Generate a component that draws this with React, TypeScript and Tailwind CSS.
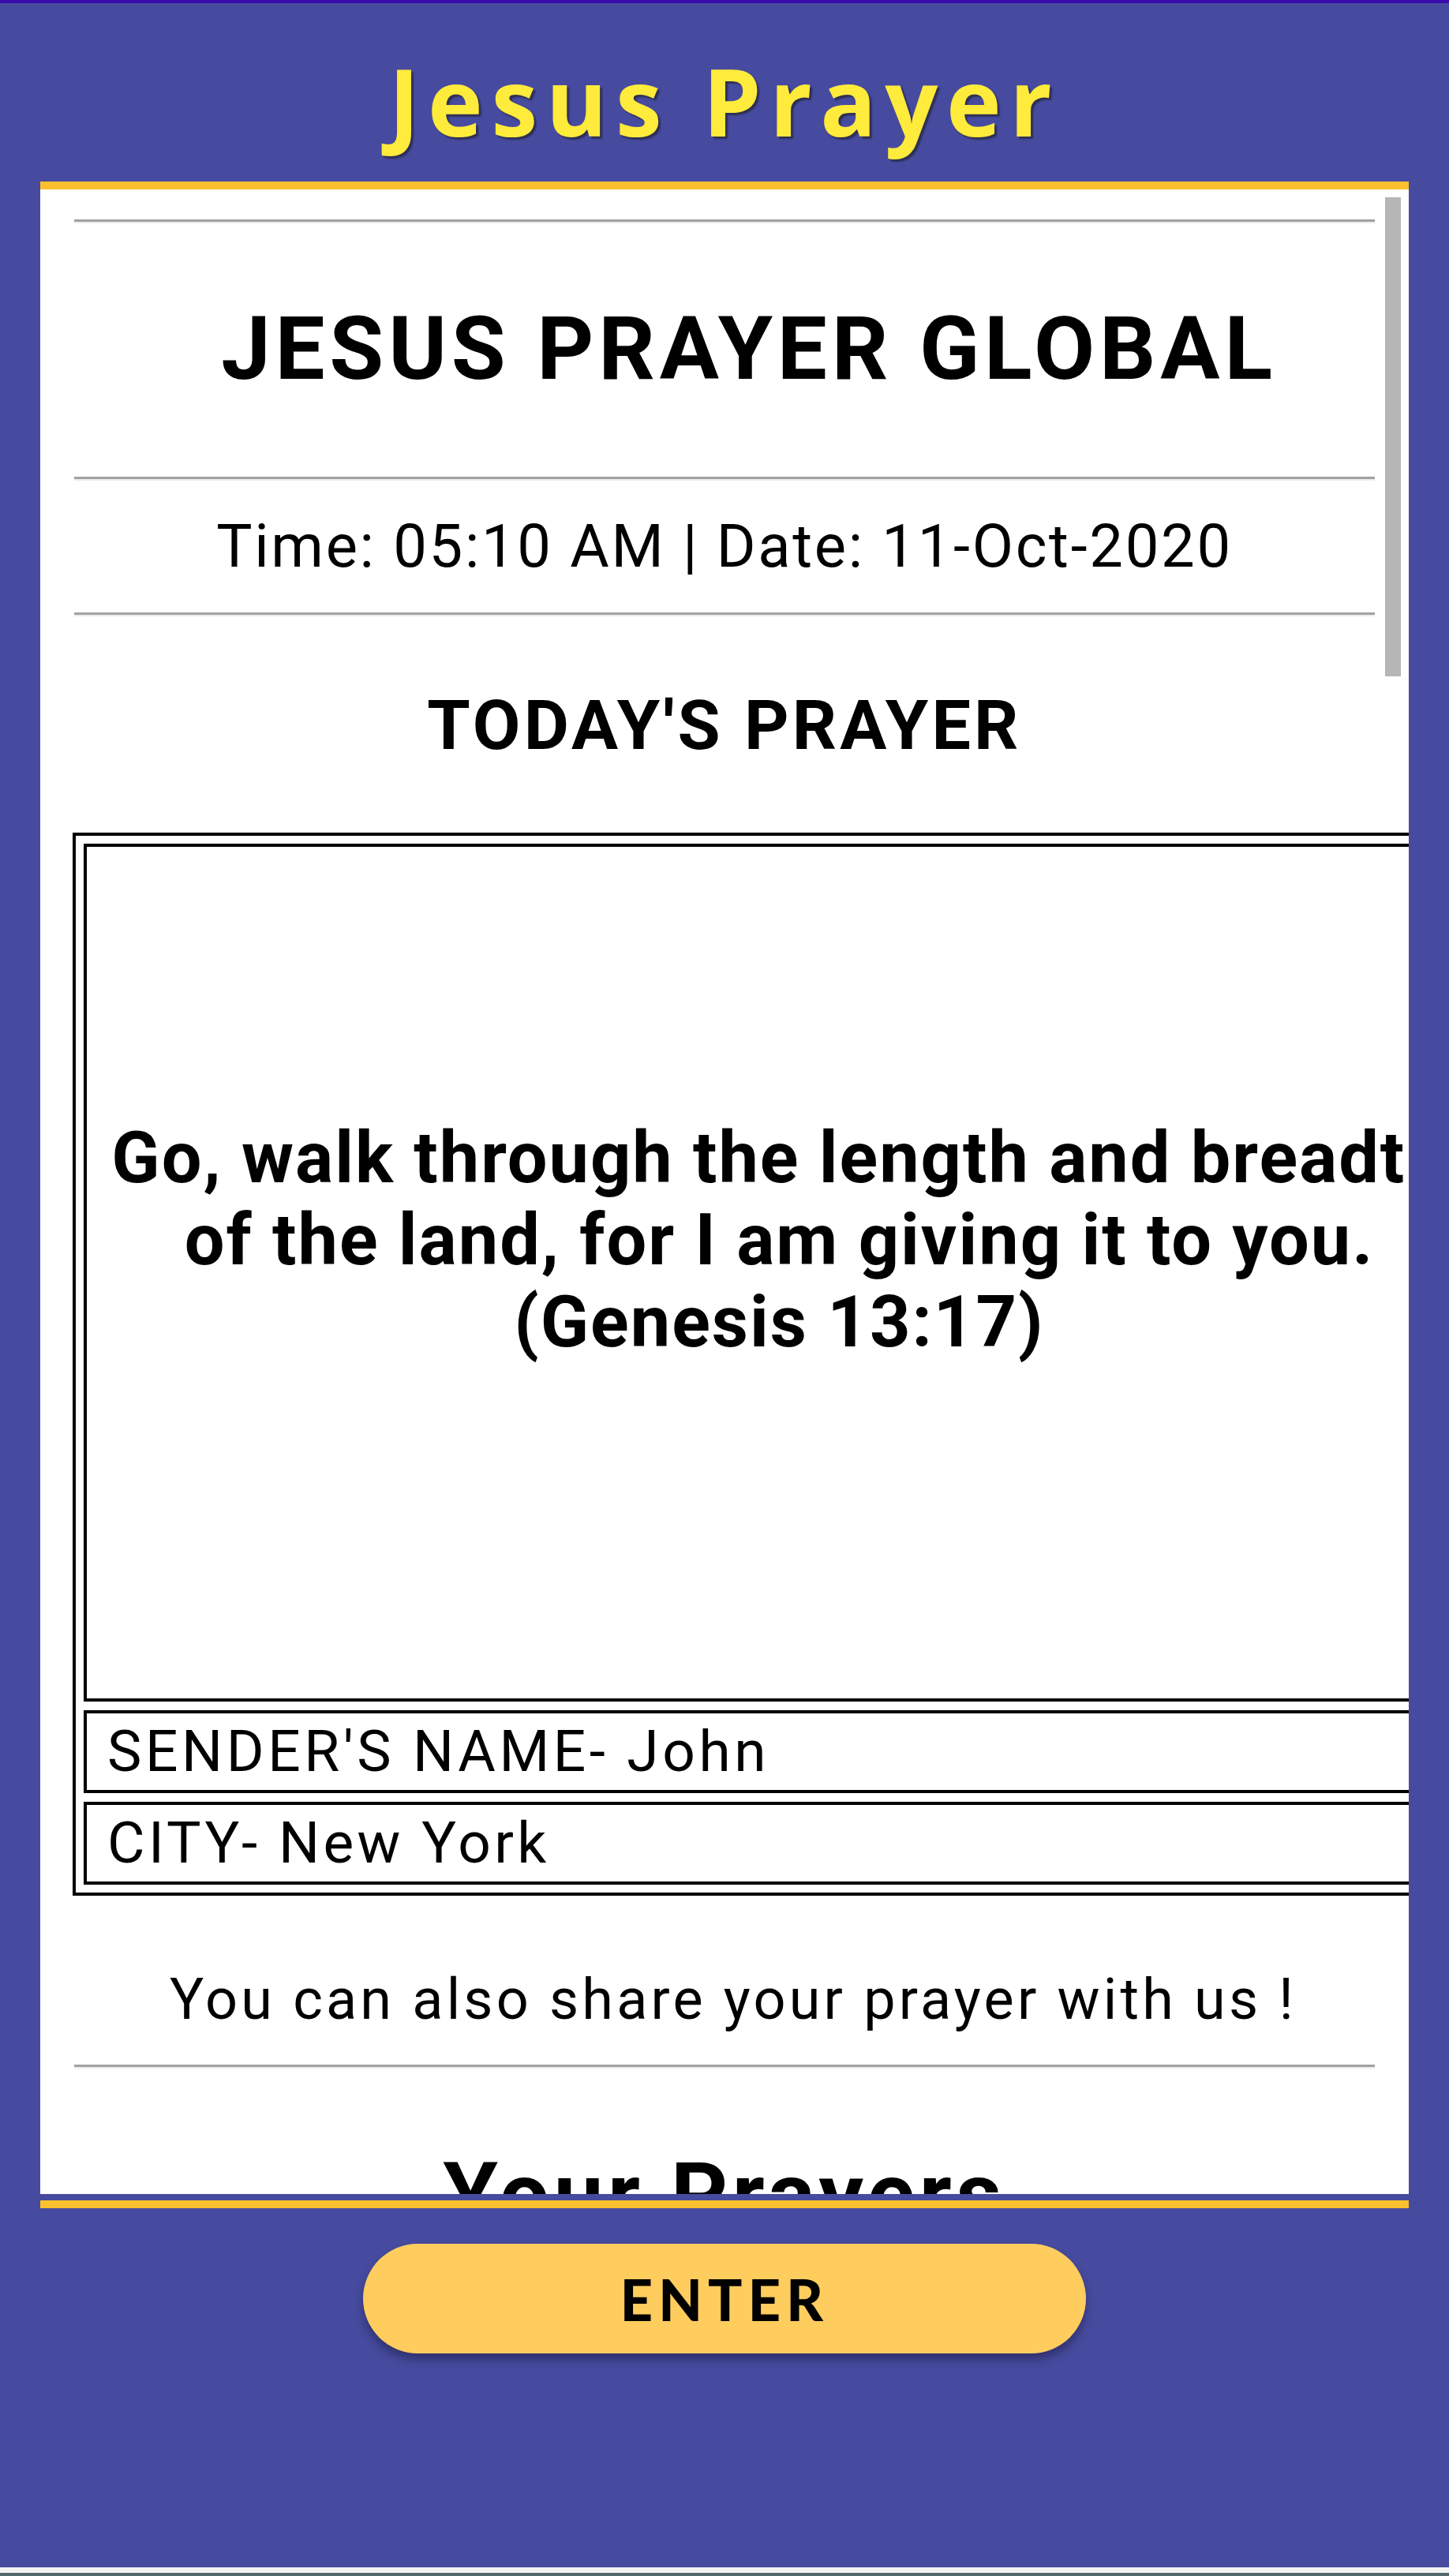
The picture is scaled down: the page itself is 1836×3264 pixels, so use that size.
import React from 'react';

const Rule: React.FC = () => (
  <div className="mx-[2px] border-t-[3px] border-t-[#a2a2a2] border-b-[2px] border-b-[#ececec]" />
);

export default function App() {
  return (
    <div className="w-[1836px] h-[3264px] flex flex-col bg-[#474b9f] font-['Roboto',sans-serif] overflow-hidden">
      <div className="h-[4px] bg-[#3a0cae]" />

      {/* header */}
      <div className="h-[226px] pt-[22px] flex items-center justify-center">
        <h1 className="text-[118px] leading-none font-bold tracking-[0.09em] text-[#ffeb3b] font-['Open_Sans',sans-serif] [text-shadow:3px_3px_2px_rgba(30,30,30,0.6)]">
          Jesus Prayer
        </h1>
      </div>

      {/* scrolling card */}
      <div className="mx-[51px] relative">
        <div className="h-[10px] bg-[#fbc02d]" />
        <div className="h-[2540px] bg-white overflow-hidden px-[41px] pt-[38px]">
          <Rule />
          <h2 className="mt-[103px] pl-[62px] text-center text-[112px] leading-none font-bold tracking-[0.052em] text-black">
            JESUS PRAYER GLOBAL
          </h2>
          <div className="mt-[106px]">
            <Rule />
          </div>
          <p className="mt-[45px] text-center text-[76px] leading-none tracking-[0.035em] text-black">
            Time: 05:10 AM | Date: 11-Oct-2020
          </p>
          <div className="mt-[46px]">
            <Rule />
          </div>
          <h3 className="mt-[94px] text-center text-[88px] leading-none font-bold tracking-[0.047em] text-black">
            TODAY'S PRAYER
          </h3>

          <div className="mt-[92px] w-[1791px] border-[4px] border-black p-[10px] flex flex-col gap-[11px]">
            <div className="h-[1087px] border-[4px] border-black flex items-center justify-center px-[20px] pb-[82px]">
              <p className="text-center text-[90px] leading-[104px] font-bold tracking-[0.022em] text-black">
                Go, walk through the length and breadth of the land, for I am giving it to you. (Genesis 13:17)
              </p>
            </div>
            <div className="h-[105px] border-[4px] border-black flex items-center pl-[26px]">
              <span className="text-[73px] leading-none tracking-[0.063em] text-black">SENDER'S NAME- John</span>
            </div>
            <div className="h-[105px] border-[4px] border-black flex items-center pl-[26px]">
              <span className="text-[73px] leading-none tracking-[0.06em] text-black">CITY- New York</span>
            </div>
          </div>

          <p className="mt-[96px] pl-[22px] text-center text-[72px] leading-none tracking-[0.058em] text-black">
            You can also share your prayer with us !
          </p>
          <div className="mt-[46px]">
            <Rule />
          </div>
          <h2 className="mt-[104px] text-center text-[112px] leading-none font-bold tracking-[0.05em] text-black">
            Your Prayers
          </h2>
        </div>
        {/* scrollbar thumb */}
        <div className="absolute top-[20px] right-[10px] w-[20px] h-[607px] bg-[#b6b6b6]" />
      </div>

      <div className="mx-[51px] mt-[8px] h-[10px] bg-[#fbc02d]" />

      <div className="mt-[45px] flex justify-center">
        <button className="w-[916px] h-[139px] rounded-full bg-[#ffcc5e] shadow-[0_8px_12px_rgba(20,20,50,0.45)] flex items-center justify-center">
          <span className="text-[72px] leading-none font-black tracking-[0.1em] text-black font-['Lato',sans-serif]">
            ENTER
          </span>
        </button>
      </div>

      <div className="flex-1" />
      <div className="h-[7px] bg-[#f3f3f3]" />
      <div className="h-[4px] bg-[#53686a]" />
    </div>
  );
}
